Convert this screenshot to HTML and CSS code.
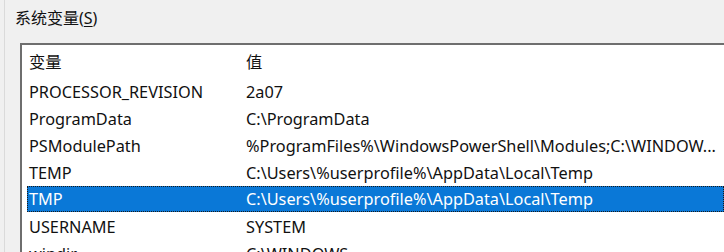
FILE: index.html
```html
<!DOCTYPE html>
<html>
<head>
<meta charset="utf-8">
<link rel="stylesheet" href="styles.css">
</head>
<body>
<div class="group">
  <div class="legend">系统变量(<u>S</u>)</div>
  <div class="list">
    <div class="row head"><span class="c1">变量</span><span class="c2">值</span></div>
    <div class="row"><span class="c1">PROCESSOR_REVISION</span><span class="c2">2a07</span></div>
    <div class="row"><span class="c1">ProgramData</span><span class="c2">C:\ProgramData</span></div>
    <div class="row"><span class="c1">PSModulePath</span><span class="c2">%ProgramFiles%\WindowsPowerShell\Modules;C:\WINDOW...</span></div>
    <div class="row"><span class="c1">TEMP</span><span class="c2">C:\Users\%userprofile%\AppData\Local\Temp</span></div>
    <div class="row sel"><span class="c1">TMP</span><span class="c2">C:\Users\%userprofile%\AppData\Local\Temp</span></div>
    <div class="row"><span class="c1">USERNAME</span><span class="c2">SYSTEM</span></div>
    <div class="row"><span class="c1">windir</span><span class="c2">C:\WINDOWS</span></div>
  </div>
</div>
</body>
</html>
```
FILE: styles.css
```css
html, body {
  margin: 0;
  padding: 0;
  background: #f0f0f0;
  overflow: hidden;
}
body {
  width: 724px;
  height: 252px;
  font-family: "Noto Sans", "Noto Sans CJK SC", sans-serif;
  font-size: 16.3px;
  color: #111;
}
.group {
  margin-left: 4px;
  padding: 8px 0 0 0;
  border-left: 1px solid #dadada;
  height: 260px;
}
.legend {
  margin-left: 10px;
  line-height: 20px;
  height: 20px;
  font-size: 16px;
}
.legend u {
  text-decoration-thickness: 1px;
  text-underline-offset: 2px;
}
.list {
  margin-top: 15px;
  margin-left: 15px;
  border-top: 2px solid #6e6e6e;
  border-left: 2px solid #6e6e6e;
  background: #fff;
  padding: 3px 0 0 5px;
  height: 220px;
}
.row {
  display: flex;
  height: 27px;
  align-items: center;
  white-space: nowrap;
}
.head {
  height: 30px;
  align-items: flex-start;
  padding-top: 1px;
  box-sizing: border-box;
}
.c1 {
  width: 217px;
  padding-left: 2px;
  flex: none;
}
.c2 {
  flex: none;
}
.sel {
  background: #0a78d7;
  color: #fff;
  outline: 1px dotted #1a1a1a;
  outline-offset: -1px;
  height: 26px;
  margin-bottom: 1px;
}
```
